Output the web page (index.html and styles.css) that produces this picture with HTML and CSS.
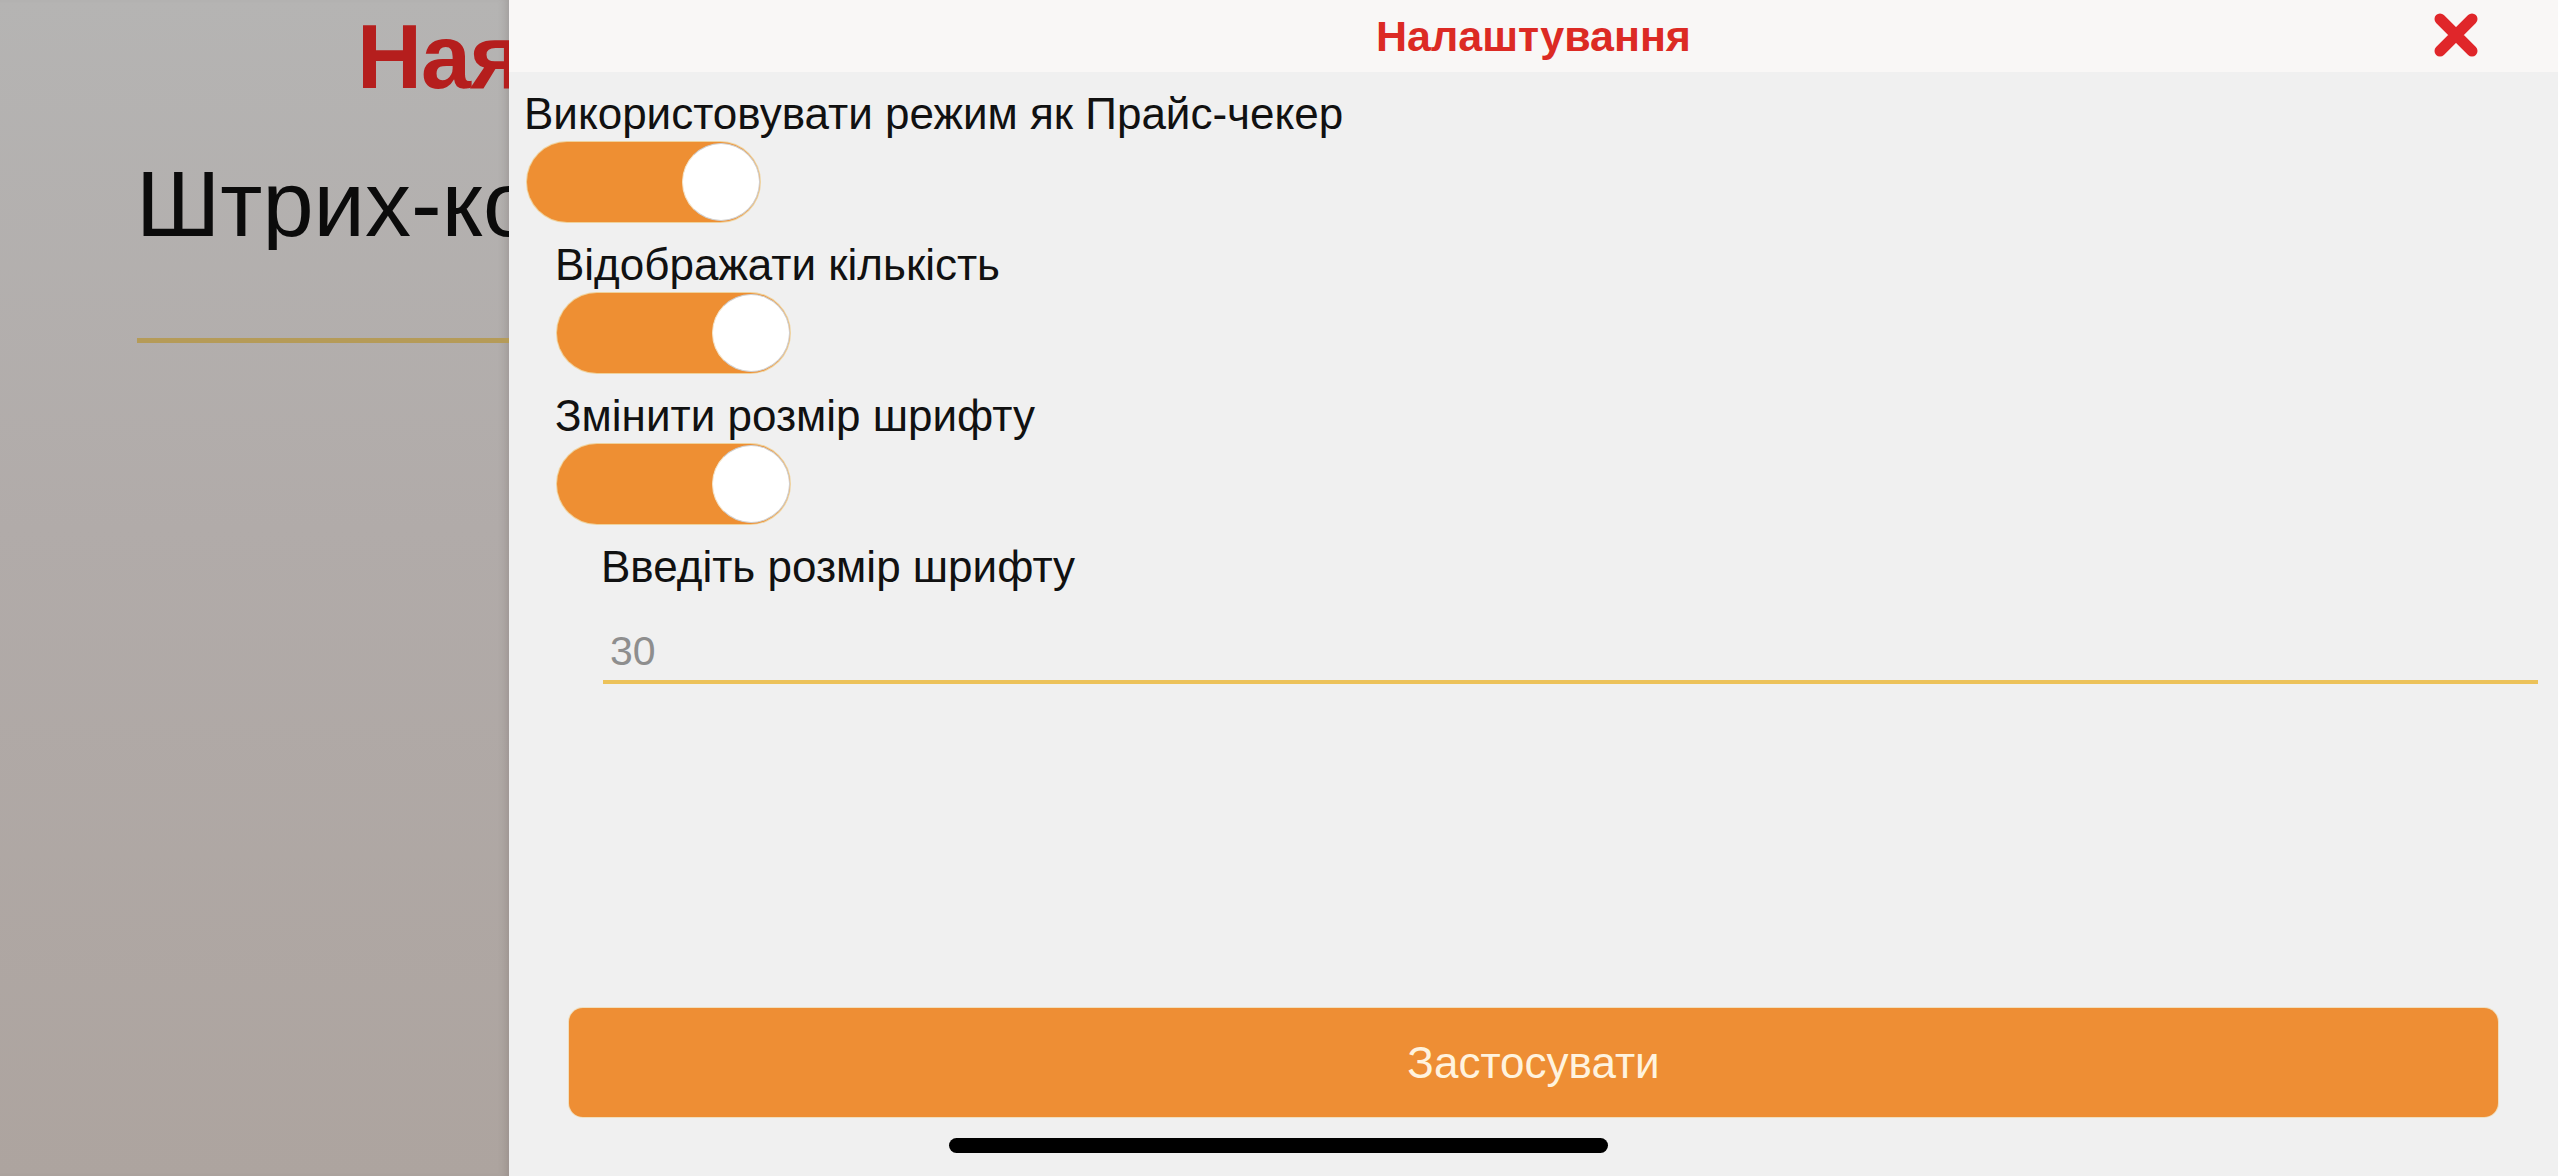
FILE: index.html
```html
<!DOCTYPE html>
<html lang="uk">
<head>
<meta charset="utf-8">
<title>Налаштування</title>
<link rel="stylesheet" href="styles.css">
</head>
<body>
<div class="screen">
  <div class="backdrop">
    <div class="page">
      <h1 class="page-title">Наявність</h1>
      <div class="barcode">Штрих-код</div>
      <div class="barcode-line"></div>
    </div>
  </div>

  <section class="sheet">
    <header class="sheet-head">
      <h2 class="sheet-title">Налаштування</h2>
      <button class="close" aria-label="Закрити">
        <svg viewBox="0 0 46 44" width="46" height="44">
          <path d="M7 6 L39 38 M39 6 L7 38" stroke="#e0262a" stroke-width="11" stroke-linecap="round" fill="none"/>
        </svg>
      </button>
    </header>

    <div class="sheet-body">
      <div class="setting">
        <div class="label">Використовувати режим як Прайс-чекер</div>
        <div class="toggle on"><span class="knob"></span></div>
      </div>

      <div class="group">
        <div class="setting">
          <div class="label">Відображати кількість</div>
          <div class="toggle on"><span class="knob"></span></div>
        </div>
        <div class="setting">
          <div class="label">Змінити розмір шрифту</div>
          <div class="toggle on"><span class="knob"></span></div>
        </div>

        <div class="subgroup">
          <div class="label">Введіть розмір шрифту</div>
          <div class="field"><span class="placeholder">30</span></div>
        </div>
      </div>
    </div>

    <button class="apply">Застосувати</button>
  </section>

  <div class="home-indicator"></div>
</div>
</body>
</html>
```

FILE: styles.css
```css
* { box-sizing: border-box; }

html, body {
  margin: 0;
  padding: 0;
}

body {
  width: 2558px;
  height: 1176px;
  overflow: hidden;
  font-family: "Liberation Sans", Arial, Helvetica, sans-serif;
}

.screen {
  position: relative;
  display: flex;
  width: 2558px;
  height: 1176px;
}

/* dimmed page behind the settings sheet */
.backdrop {
  width: 509px;
  flex: none;
  overflow: hidden;
  background: linear-gradient(180deg, #b5b4b3 0%, #b1aba9 45%, #ada49f 100%);
  box-shadow: inset -8px 0 8px -6px rgba(90, 80, 75, 0.25);
}

.page {
  width: 509px;
}

.page-title,
.barcode {
  overflow: hidden;
  white-space: nowrap;
}

.page-title {
  margin: 0;
  padding: 12px 0 0 357px;
  font-size: 90px;
  line-height: 90px;
  font-weight: 700;
  color: #b51e1d;
  letter-spacing: -1px;
}

.barcode {
  margin-top: 56px;
  padding-left: 136px;
  font-size: 92px;
  line-height: 92px;
  color: #0b0b0b;
}

.barcode-line {
  margin: 88px 0 0 137px;
  height: 5px;
  background: #b59b58;
}

/* settings sheet */
.sheet {
  flex: 1;
  display: flex;
  flex-direction: column;
  background: #f0f0f0;
}

.sheet-head {
  height: 72px;
  flex: none;
  display: grid;
  grid-template-columns: 1fr auto 1fr;
  align-items: center;
  background: #f9f7f6;
}

.sheet-title {
  grid-column: 2;
  margin: 0;
  font-size: 43px;
  font-weight: 700;
  color: #dc2a24;
  line-height: 1;
}

.close {
  grid-column: 3;
  justify-self: end;
  margin: 0 79px 2px 0;
  padding: 0;
  border: 0;
  background: none;
  width: 46px;
  height: 44px;
  display: flex;
}

.sheet-body {
  padding: 17px 20px 0 15px;
}

.label {
  font-size: 44px;
  line-height: 50px;
  color: #111;
  white-space: nowrap;
}

.setting {
  display: flex;
  flex-direction: column;
  align-items: flex-start;
  gap: 3px;
  margin-bottom: 18px;
}

.toggle {
  position: relative;
  width: 233px;
  height: 80px;
  margin-left: 3px;
  border-radius: 40px;
  background: #ee8f33;
  box-shadow: 0 0 0 1px rgba(238, 196, 120, 0.7);
}

.toggle .knob {
  position: absolute;
  top: 1px;
  right: 0;
  width: 78px;
  height: 78px;
  border-radius: 50%;
  background: #fff;
  border: 1px solid #cfcfcf;
  border-left-color: #f3e3c8;
}

.group {
  padding-left: 31px;
}

.group .toggle {
  margin-left: 2px;
}

.subgroup {
  padding-left: 46px;
}

.field {
  margin: 24px 0 0 2px;
  padding: 10px 0 4px 7px;
  border-bottom: 4px solid #ecc25a;
}

.placeholder {
  display: block;
  font-size: 41px;
  line-height: 50px;
  color: #8e8e8e;
}

.apply {
  margin: auto 60px 59px 60px;
  height: 109px;
  border: 0;
  border-radius: 14px;
  background: #ee8e34;
  color: #fff3de;
  font-family: inherit;
  font-size: 44px;
  box-shadow: 0 0 0 1px rgba(240, 205, 140, 0.5);
}

/* system home bar */
.home-indicator {
  position: absolute;
  left: 50%;
  bottom: 23px;
  width: 659px;
  height: 15px;
  margin-left: -330px;
  border-radius: 8px;
  background: #000;
}
```
